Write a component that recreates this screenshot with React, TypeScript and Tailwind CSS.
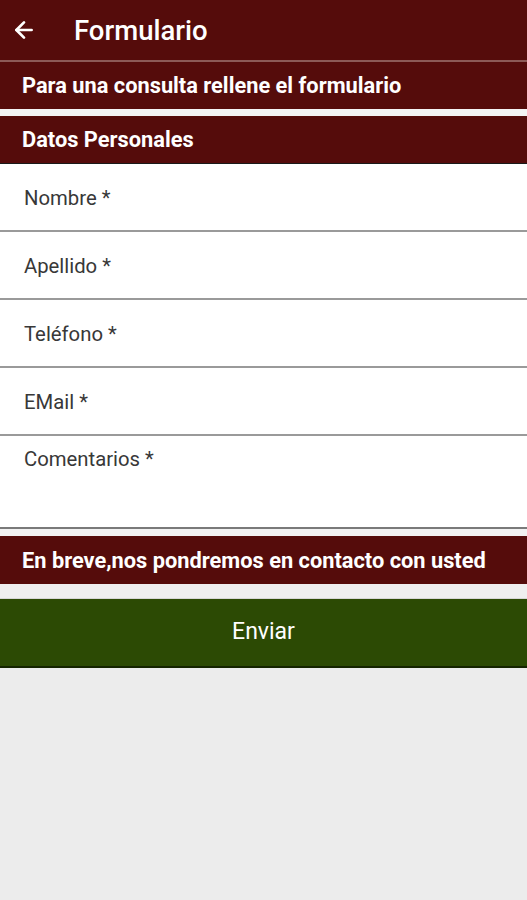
import { ArrowLeft } from "lucide-react";

const fields = ["Nombre *", "Apellido *", "Teléfono *", "EMail *"];

export default function App() {
  return (
    <div className="min-h-[900px] bg-[#ececec] font-['Roboto',sans-serif]">
      {/* Toolbar */}
      <div className="flex h-[60px] items-center bg-[#550c0b] text-white">
        <ArrowLeft className="ml-[11px] h-[26px] w-[26px]" strokeWidth={2.5} />
        <span className="ml-[37px] pt-[2px] text-[27.5px] font-medium">Formulario</span>
      </div>
      <div className="h-[2px] bg-[#8c5a57]" />
      <div className="flex h-[47px] items-center bg-[#550c0b] px-[22px] pt-[2px] text-[21.8px] font-bold text-white">
        Para una consulta rellene el formulario
      </div>
      <div className="h-[7px] bg-[#f4f4f4]" />
      <div className="flex h-[48px] items-center border-b border-[#1a1a1a] bg-[#550c0b] px-[22px] pt-[2px] text-[21.8px] font-bold text-white">
        Datos Personales
      </div>

      {/* Form */}
      <div className="bg-white">
        {fields.map((f) => (
          <div
            key={f}
            className="flex h-[68px] items-center border-b-2 border-[#9a9a9a] px-6 pt-[2px] text-[20.3px] text-[#383838]"
          >
            {f}
          </div>
        ))}
        <div className="h-[93px] border-b-2 border-[#7a7a7a] px-6 pt-[8px] text-[20.3px] text-[#383838]">
          Comentarios *
        </div>
      </div>

      <div className="h-[7px] bg-[#f2f2f2]" />
      <div className="flex h-[48px] items-center bg-[#550c0b] px-[22px] pt-[2px] text-[21.8px] font-bold text-white">
        En breve,nos pondremos en contacto con usted
      </div>
      <div className="h-[15px] border-b border-[#d6d6d6] bg-[#efefef]" />

      <button className="flex h-[69px] w-full items-center justify-center border-b-2 border-[#142400] bg-[#2c4a04] text-[23px] text-white">
        Enviar
      </button>
    </div>
  );
}
